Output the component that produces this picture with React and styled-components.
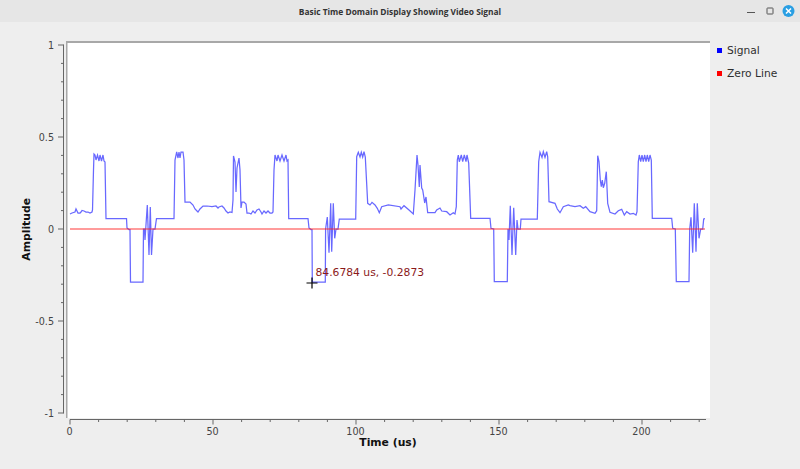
import React from 'react';
import styled, { createGlobalStyle } from 'styled-components';

const GlobalStyle = createGlobalStyle`
  html, body {
    margin: 0;
    padding: 0;
    background: #eeeeee;
    overflow: hidden;
  }
`;

// trace points are in window pixels, the plot viewBox is offset to match
const SIGNAL = `70,214 72,213 75,212 76,209 78,213 80,213 81,212 82,210.5 84,211 86,212 88,212 90,213 92,212 92.5,210
93.5,170 94,154 95,155 96,160 97.5,155 99,161 100,155 101.5,161 103,155 104,161 105,162 106,218.5 126.5,218.5 127,228 129,229.5
130,229.5 130.5,282 143,282 143.5,229 144.5,229 145,240 147.3,205 149,255 150.3,207 151.5,255 153,229 155,229 156.5,218.5 174,218.5
175,160 176.7,152 178,158 179,152 180,158 181,152 183,152 184,160 185,202 190,202 193,205 195,209 197,211 198,212 200,209 203,206
207,206 212,206.5 216,206 218,208 219,207 222,206 224,208 226,211 228,213 230,212 232,212.5 233,200 233.5,156 235,162 236,192 237,168
239,158 240,170 241,208 242,202 244,202 246,204 247,213 249,213 251,214 253,211 255,213 257,210 259,209 261,212 262,214 264,211 266,213
268,211 270,213 272,213 273,212 274,170 275,155 277,161 278,155 280,161 282,155 284,161 286,155 287,161 288,160 288.7,218.5 308,218.5
309,228 311,229.5 312,229.5 312.3,282 325.3,282 325.6,229 327.3,217 329,252.7 330.7,203.3 331.7,251.7 333.3,203.3 334.7,238.3 336,229
338,229 339.3,219 355.7,219 356.7,156.7 358.3,152.3 360,157 361.3,152.3 362.7,157 364,151.7 365.3,157 367.7,203.3 370,205 372,202.3
375,205 377.3,208.3 379.3,212.7 381.7,206.7 388.3,205 400,206.7 401,209 404,205.7 409,210 413.3,214 415,190 417,155 418,165 419.3,187
420,165 421.7,188 422.7,190 424.7,203 426,197 427.7,212.7 435,212.7 436.7,210 440,208 441.7,211 446.7,211.7 450,215 453.3,212.7 455,214
456.3,206.7 457.3,160 458.3,155 459.3,161.7 461.3,155 462.7,161.7 464.3,155 466,161.7 467,155 468.7,163 470.7,218.3 490,218.3 491,228.3
493.7,229 494.3,281.7 507.3,281.7 508,229 509,240 510.3,205.7 512,255 513.7,207.7 515.7,255 517,220 518,229 520.3,229 521,219 537.3,219
538.7,161.7 540,152.3 542,157.3 543.3,151.7 545,157.3 546.7,151.7 547.7,156.7 549,201.7 555,203.3 557.3,209 560,212.7 563.3,206.7
568.3,205 570,205.7 575,206.7 580,205.7 583.3,208.3 585.7,206.7 590,211.7 595,213.3 596.7,210.7 597.7,155.7 599,161.7 600.3,180
601.3,186.7 602.3,180 603.3,187.7 604.7,183.3 606.3,171.7 607.7,203.3 610,212.3 615,214 618.3,210.7 621.7,209.3 624.3,215 626.7,211.7
630,214 633.3,213.3 636,215 637,211.7 638.3,161.7 639.3,155 640.7,161.7 642,155 643.3,161.7 644.7,155 646,161.7 647.3,155 648.7,161.7
650,155 651.3,160 652.3,218.3 671.7,218.3 672.7,228.3 675.3,229 676.3,281.7 689,281.7 689.7,229 691,217.3 692.7,252.7 694.3,203.3
696,251.7 697.3,203.3 699,238.3 700.7,229 702.7,229 703.7,219 705,218.7`;

const Y_LABELS = [
  { y: 45, text: '1' },
  { y: 137, text: '0.5' },
  { y: 229, text: '0' },
  { y: 321, text: '-0.5' },
  { y: 413, text: '-1' },
];
const X_LABELS = [
  { x: 70, text: '0' },
  { x: 213, text: '50' },
  { x: 356, text: '100' },
  { x: 499, text: '150' },
  { x: 642, text: '200' },
];

const Window = styled.div`
  width: 800px;
  height: 469px;
  display: flex;
  flex-direction: column;
  background: #eeeeee;
  font-family: "DejaVu Sans", sans-serif;
  color: #2e2e2e;
`;

const TitleBar = styled.div`
  height: 22px;
  flex: none;
  display: flex;
  align-items: center;
  background: #e6e6e6;
  position: relative;
`;

const WindowTitle = styled.div`
  width: 100%;
  text-align: center;
  font: 700 8.4px "Open Sans", sans-serif;
  color: #333333;
`;

const WindowButtons = styled.svg`
  position: absolute;
  right: 0;
  top: 0;
`;

const Body = styled.div`
  flex: 1;
  display: flex;
  align-items: flex-start;
  padding-top: 19px;
`;

const YTitleColumn = styled.div`
  width: 33px;
  height: 377px;
  flex: none;
  display: flex;
  align-items: center;
  justify-content: flex-end;
`;

const AxisTitle = styled.div`
  font-size: 10.8px;
  font-weight: 700;
  color: #111111;
  writing-mode: ${(p) => (p.$vertical ? 'vertical-rl' : 'horizontal-tb')};
  transform: ${(p) => (p.$vertical ? 'rotate(180deg)' : 'none')};
`;

const Scale = styled.svg`
  display: block;
  flex: none;
  font-size: 9.6px;
  fill: #444444;
`;

const PlotColumn = styled.div`
  width: 644px;
  flex: none;
  display: flex;
  flex-direction: column;
`;

const PlotFrame = styled.div`
  height: 377px;
  position: relative;
  background: #ffffff;
`;

const PlotCanvas = styled.svg`
  display: block;
`;

const Readout = styled.div`
  position: absolute;
  left: 249.5px;
  top: 225px;
  font-size: 10.75px;
  line-height: 14px;
  color: #8b1a1a;
  white-space: nowrap;
`;

const XTitleRow = styled.div`
  display: flex;
  justify-content: center;
  margin-top: -6px;
`;

const Legend = styled.div`
  flex: 1;
  display: flex;
  flex-direction: column;
  gap: 7px;
  padding: 1px 0 0 7px;
`;

const LegendItem = styled.div`
  height: 16px;
  display: flex;
  align-items: center;
  gap: 5px;
  font-size: 10.7px;
  color: #2e2e2e;
`;

const LegendSwatch = styled.span`
  width: 5px;
  height: 5px;
  background: ${(p) => p.$color};
`;

const range = (from, to, step) => {
  const out = [];
  for (let v = from; v <= to + 0.01; v += step) out.push(v);
  return out;
};

const App = () => (
  <Window>
    <GlobalStyle />
    <TitleBar>
      <WindowTitle>Basic Time Domain Display Showing Video Signal</WindowTitle>
      <WindowButtons width="60" height="22" viewBox="740 0 60 22">
        <path d="M747 12.5h8" stroke="#555" strokeWidth="1" fill="none" />
        <rect x="767" y="8" width="6" height="6" stroke="#555" strokeWidth="1" fill="none" rx="0.5" />
        <circle cx="788.5" cy="11" r="6" fill="#2a9fe3" />
        <path d="M786 8.5l5 5M791 8.5l-5 5" stroke="#fff" strokeWidth="1.5" fill="none" />
      </WindowButtons>
    </TitleBar>
    <Body>
      <YTitleColumn>
        <AxisTitle $vertical>Amplitude</AxisTitle>
      </YTitleColumn>
      <Scale width="33" height="377" viewBox="33 41 33 377">
        <path d="M63.5 44.5V413.5" stroke="#666" fill="none" />
        {range(45, 413, 18.4).map((y, i) => (
          <path
            key={y}
            d={`M${i % 5 === 0 ? 58 : 61} ${y}H63.5`}
            stroke="#666"
            fill="none"
          />
        ))}
        {Y_LABELS.map((l) => (
          <text key={l.text} x="54" y={l.y + 3.5} textAnchor="end">{l.text}</text>
        ))}
      </Scale>
      <PlotColumn>
        <PlotFrame>
          <PlotCanvas width="644" height="377" viewBox="66 41 644 377">
            <path d="M67 42H710" stroke="#a8a8a8" strokeWidth="2" fill="none" />
            <path d="M66.5 41V418" stroke="#a8a8a8" strokeWidth="2" fill="none" />
            <polyline points={SIGNAL} fill="none" stroke="#2020ff" strokeOpacity="0.68" strokeWidth="1.25" />
            <path d="M70 229H705" stroke="#ff2020" strokeOpacity="0.6" strokeWidth="1.4" fill="none" />
            <path d="M306.5 283H317.5M312 277.5V288.5" stroke="#000" strokeWidth="1.2" fill="none" />
          </PlotCanvas>
          <Readout>84.6784 us, -0.2873</Readout>
        </PlotFrame>
        <Scale width="644" height="24" viewBox="66 418 644 24">
          <path d="M70 419.5H706" stroke="#666" fill="none" />
          {range(70, 706, 28.6).map((x, i) => (
            <path
              key={x}
              d={`M${x} 419.5V${i % 5 === 0 ? 424.5 : 422}`}
              stroke="#666"
              fill="none"
            />
          ))}
          {X_LABELS.map((l) => (
            <text key={l.text} x={l.x - 0.5} y="435" textAnchor="middle">{l.text}</text>
          ))}
        </Scale>
        <XTitleRow>
          <AxisTitle>Time (us)</AxisTitle>
        </XTitleRow>
      </PlotColumn>
      <Legend>
        <LegendItem>
          <LegendSwatch $color="#0000ff" />
          Signal
        </LegendItem>
        <LegendItem>
          <LegendSwatch $color="#ff0000" />
          Zero Line
        </LegendItem>
      </Legend>
    </Body>
  </Window>
);

export default App;
